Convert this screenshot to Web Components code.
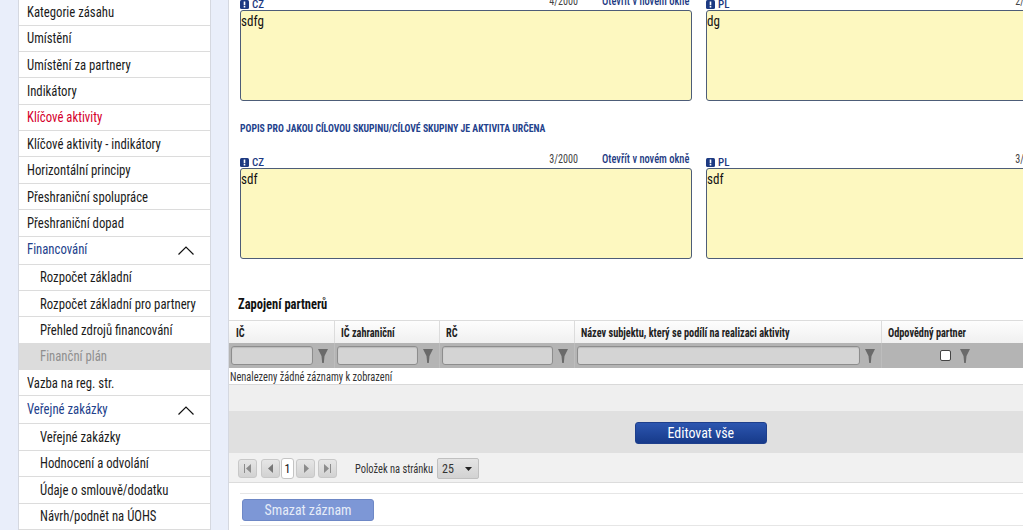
<!DOCTYPE html>
<html lang="cs"><head><meta charset="utf-8"><style>
html,body{margin:0;padding:0;height:530px;overflow:hidden}
body{background:#e9eefa;font-family:Roboto,"Liberation Sans",sans-serif;font-stretch:75%;display:flex;width:1023px}
</style></head><body>
<side-nav>
<nav-item style="height:25.5px">Kategorie zásahu</nav-item>
<nav-item>Umístění</nav-item>
<nav-item>Umístění za partnery</nav-item>
<nav-item>Indikátory</nav-item>
<nav-item kind="active">Klíčové aktivity</nav-item>
<nav-item>Klíčové aktivity - indikátory</nav-item>
<nav-item>Horizontální principy</nav-item>
<nav-item>Přeshraniční spolupráce</nav-item>
<nav-item>Přeshraniční dopad</nav-item>
<nav-item kind="group">Financování</nav-item>
<nav-item kind="sub">Rozpočet základní</nav-item>
<nav-item kind="sub">Rozpočet základní pro partnery</nav-item>
<nav-item kind="sub">Přehled zdrojů financování</nav-item>
<nav-item kind="sub off">Finanční plán</nav-item>
<nav-item>Vazba na reg. str.</nav-item>
<nav-item kind="group">Veřejné zakázky</nav-item>
<nav-item kind="sub">Veřejné zakázky</nav-item>
<nav-item kind="sub">Hodnocení a odvolání</nav-item>
<nav-item kind="sub">Údaje o smlouvě/dodatku</nav-item>
<nav-item kind="sub">Návrh/podnět na ÚOHS</nav-item>
</side-nav>
<main-panel>
<text-pair count="4/2000" cz="sdfg" pl="dg" pln="2/2000" style="margin-top:-5px"></text-pair>
<section-title>POPIS PRO JAKOU CÍLOVOU SKUPINU/CÍLOVÉ SKUPINY JE AKTIVITA URČENA</section-title>
<text-pair count="3/2000" cz="sdf" pl="sdf" pln="3/2000"></text-pair>
<partner-table></partner-table>
<delete-bar></delete-bar>
</main-panel>
<script>
function def(name,html){customElements.define(name,class extends HTMLElement{constructor(){super();const r=this.attachShadow({mode:'open'});r.innerHTML=typeof html==='function'?html(this):html;}})}
const sq='.q{display:inline-block;white-space:nowrap;transform-origin:0 50%}';
const funnel='<svg width="10" height="14" viewBox="0 0 10 14" style="flex:none"><path d="M0 0h10L6.500 7 5.800 14H4.200L3.500 7z" fill="#6a6a6a"/></svg>';
def('side-nav',`<style>:host{display:block;width:193px;margin-left:18px;flex:none;background:#fff;border-left:1px solid #d5d8e0;border-right:1px solid #d5d8e0;box-sizing:border-box;height:530px;overflow:hidden}</style><slot></slot>`);
customElements.define('nav-item',class extends HTMLElement{constructor(){super();const k=this.getAttribute('kind')||'';
this.attachShadow({mode:'open'}).innerHTML=`<style>${sq}
:host{display:flex;align-items:center;box-sizing:border-box;height:26.4px;border-bottom:1px solid #dcdcdc;padding-left:8px;font-size:14px;color:#1b1b1b;white-space:nowrap;position:relative}
.q{transform:scaleX(.91)}
:host([kind~=sub]){padding-left:21px}
:host([kind~=off]){background:#dcdcdc;color:#8f8f8f;border-color:#dcdcdc}
:host([kind~=active]){color:#d5002c}
:host([kind~=group]){color:#23418c;height:27.9px;justify-content:space-between;padding:0 16px 2px 8px}
svg{display:block;margin-top:3px}
</style><span class="q"><slot></slot></span>${k==='group'?'<svg width="16" height="9" viewBox="0 0 16 9"><path d="M.5 8.500L8 1l7.500 7.500" fill="none" stroke="#111" stroke-width="1.200"/></svg>':''}`;}});
def('text-pair',t=>{const one=(lang,txt,right)=>`<div class="c"><div class="l"><svg width="9" height="9" viewBox="0 0 9 9"><rect width="9" height="9" rx="1.500" fill="#1d3a82"/><rect x="3.700" y="1.500" width="1.600" height="3.800" fill="#fff"/><rect x="3.700" y="6" width="1.600" height="1.500" fill="#fff"/></svg><b>${lang}</b><i></i><span class="n q">${right}</span><a><span class="q">Otevřít v novém okně</span></a></div><div class="t"><span class="q">${txt}</span></div></div>`;
return `<style>${sq}:host{display:flex;gap:14px;padding-left:11px;width:918px;flex:none}
.c{width:452px;flex:none}.l{display:flex;align-items:center;height:15px;font-size:12px;color:#1d3a82}
svg{margin-top:3px;flex:none}
b{font-weight:500;margin:3px 0 0 3px;font-size:11px}i{flex:1}
.n{color:#444;margin:-3px 24px 0 0;transform:scaleX(.843);transform-origin:100% 50%}
a{font-weight:500;width:88px;margin:-3px 2px 0 0;white-space:nowrap}a .q{transform:scaleX(.87)}
.t{box-sizing:border-box;height:91px;background:#fdf8c0;border:1px solid #4d5d78;border-radius:3px;padding:1px 0;font-size:15px;color:#111}.t .q{transform:scaleX(.87)}</style>${one('CZ',t.getAttribute('cz'),t.getAttribute('count'))}${one('PL',t.getAttribute('pl'),t.getAttribute('pln'))}`});
def('main-panel',`<style>:host{display:flex;flex-direction:column;margin-left:17px;width:795px;flex:none;background:#fff;border-left:1px solid #d5d8e0;height:530px;overflow:hidden}</style><slot></slot>`);
def('section-title',`<style>${sq}:host{display:block;font-size:11px;font-weight:700;color:#23418c;padding:23px 0 0 11px;height:52px;box-sizing:border-box;line-height:10px;flex:none}.q{transform:scaleX(.884)}</style><span class="q"><slot></slot></span>`);
def('partner-table',`<style>${sq}
:host{display:block;width:794px;flex:none;font-size:12px}
h3{margin:0;font-size:14px;font-weight:700;color:#111;height:24px;padding:37px 0 0 9px;line-height:16px}
h3 .q{transform:scaleX(.895)}
.g{display:grid;grid-template-columns:106px 105px 135px 307px 1fr}
.h{height:23px;border-top:1px solid #dcdcdc;box-sizing:border-box;background:linear-gradient(#fdfdfd,#f0f0f0)}
.h>div{border-right:1px solid #dcdcdc;padding-left:6px;font-weight:700;line-height:25px;height:22px;color:#222;font-size:12px}
.h>div:first-child{padding-left:7px}
.h .q{transform:scaleX(.855)}
.f{height:25px;background:#b4b4b4}
.f>div{display:flex;align-items:center;padding:0 6px 0 2px;gap:5px;border-right:1px solid #bdbdbd}
.f>div:last-child{padding-left:58px;gap:9px;border:0}
.inp{flex:1;height:19px;box-sizing:border-box;background:#d4d4d4;border:1px solid #8d8d8d;border-radius:3px;box-shadow:inset 0 1px 1px #bbb}
.ck{width:11px;height:11px;box-sizing:border-box;background:#fff;border:1px solid #444;border-radius:2px;flex:none}
.e{height:17px;border-bottom:1px solid #d9d9d9;box-sizing:border-box;line-height:18px;padding-left:1px;color:#333}
.e .q{transform:scaleX(.867)}
.s{height:26px;background:#efefef}
.b{height:42px;background:#e0e0e0;display:flex;align-items:center;box-sizing:border-box;padding-top:2px}
.b div{width:132px;height:22px;margin-left:406px;background:linear-gradient(#2c56b0,#173a8a);border-radius:3px;color:#fff;font-size:15px;text-align:center;line-height:21px;border:1px solid #1e3f8c;box-sizing:border-box}
.b .q{transform:scaleX(.93);transform-origin:50% 50%}
.p{height:30px;background:#f1f1f1;border-bottom:1px solid #dcdcdc;box-sizing:border-box;display:flex;align-items:center;padding:2px 0 0 9px;color:#333}
.p u{display:flex;align-items:center;justify-content:center;width:19px;height:19px;box-sizing:border-box;background:linear-gradient(#e6e6e6,#d2d2d2);border:1px solid #c8c8c8;border-radius:3px;flex:none}
.one{width:13px;height:21px;margin:0 2px 0 1px;background:#fff;border:1px solid #c4c4c4;border-radius:3px;color:#111;text-align:center;line-height:20px;box-sizing:border-box;font-size:12px;flex:none}
.lb{width:78px;margin-left:18px;flex:none}.lb .q{transform:scaleX(.87)}
.sel{display:flex;align-items:center;width:42px;height:21px;box-sizing:border-box;background:linear-gradient(#e4e4e4,#d2d2d2);border:1px solid #c0c0c0;border-radius:2px;margin-left:4px;padding:0 6px 0 4px;justify-content:space-between;flex:none}
</style>
<h3><span class="q">Zapojení partnerů</span></h3>
<div class="g h"><div><span class="q">IČ</span></div><div><span class="q">IČ zahraniční</span></div><div><span class="q">RČ</span></div><div><span class="q">Název subjektu, který se podílí na realizaci aktivity</span></div><div style="border:0"><span class="q">Odpovědný partner</span></div></div>
<div class="g f"><div><span class="inp"></span>${funnel}</div><div><span class="inp"></span>${funnel}</div><div><span class="inp"></span>${funnel}</div><div><span class="inp"></span>${funnel}</div><div><span class="ck"></span>${funnel}</div></div>
<div class="e"><span class="q">Nenalezeny žádné záznamy k zobrazení</span></div>
<div class="s"></div>
<div class="b"><div><span class="q">Editovat vše</span></div></div>
<div class="p">
<u><svg width="9" height="9" viewBox="0 0 9 9"><path d="M1 0h1v9H1zM8 0v9L3 4.500z" fill="#8c8c8c"/></svg></u>
<u style="margin-left:4px"><svg width="6" height="9" viewBox="0 0 6 9"><path d="M5 0v9L0 4.500z" fill="#777"/></svg></u>
<span class="one">1</span>
<u><svg width="6" height="9" viewBox="0 0 6 9"><path d="M1 0v9l5-4.500z" fill="#8c8c8c"/></svg></u>
<u style="margin-left:3px"><svg width="9" height="9" viewBox="0 0 9 9"><path d="M1 0v9l5-4.500zM7 0h1v9H7z" fill="#8c8c8c"/></svg></u>
<span class="lb"><span class="q">Položek na stránku</span></span>
<span class="sel"><span class="q">25</span><svg width="7" height="4" viewBox="0 0 7 4"><path d="M0 0h7L3.500 4z" fill="#222"/></svg></span>
</div>`);
def('delete-bar',`<style>${sq}:host{display:block;margin:10px 0 0 11px;border-top:1px solid #e6e6e6;border-bottom:1px solid #e6e6e6;height:33px;box-sizing:border-box;padding:5px 0 0 2px;flex:none}
div{width:132px;height:22px;box-sizing:border-box;background:#7d97d6;border:1px solid #6e88c6;border-radius:3px;color:#e6ecf8;text-align:center;font-size:15px;line-height:21px}
.q{transform:scaleX(.925);transform-origin:50% 50%}</style><div><span class="q">Smazat záznam</span></div>`);
</script>
</body></html>
